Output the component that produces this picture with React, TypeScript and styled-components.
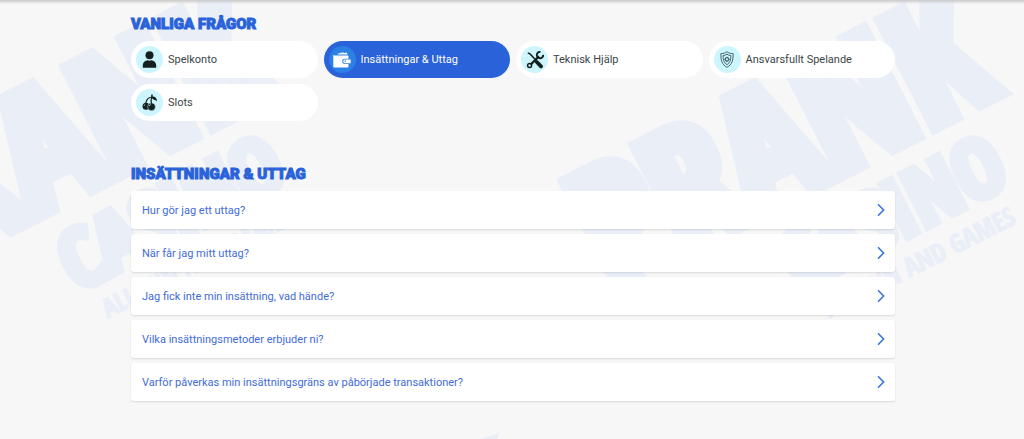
import React, { useState } from "react";
import styled, { createGlobalStyle } from "styled-components";

const GlobalStyle = createGlobalStyle`
  *, *::before, *::after { box-sizing: border-box; }
  body {
    margin: 0;
    background: #f7f7f7;
    font-family: Roboto, "Liberation Sans", sans-serif;
  }
`;

const Page = styled.main`
  position: relative;
  min-height: 100vh;
  padding: 16px 16px 38px;
  overflow: hidden;
`;

const TopShade = styled.div`
  position: absolute;
  inset: 0 0 auto;
  height: 4px;
  background: linear-gradient(#c9c9c9, rgba(247, 247, 247, 0));
`;

const Watermark = styled.svg`
  position: absolute;
  inset: 0;
  width: 100%;
  height: 100%;
  fill: #e9eef7;
  stroke: #e9eef7;
  font-family: "Open Sans Condensed", "Noto Sans ExtraCondensed", "Roboto Condensed", Roboto, sans-serif;
  font-weight: 700;
  pointer-events: none;
`;

const Container = styled.div`
  position: relative;
  max-width: 766px;
  margin: 0 auto;
  padding-left: 2px;
`;

const Heading = styled.h2`
  margin: 0 0 9px;
  color: #2962d9;
  font-family: Roboto, "Open Sans", sans-serif;
  font-size: 15px;
  font-weight: 900;
  line-height: 16px;
  text-transform: uppercase;
  -webkit-text-stroke: 1px #2962d9;
`;

const Categories = styled.nav`
  display: grid;
  grid-template-columns: repeat(auto-fill, minmax(180px, 1fr));
  gap: 6px;
  margin-bottom: 45px;
`;

const IconDisc = styled.span<{ $active: boolean }>`
  display: flex;
  align-items: center;
  justify-content: center;
  flex: none;
  width: 27px;
  height: 27px;
  border-radius: 50%;
  background: ${(p) => (p.$active ? "#2b80e3" : "#ccf5fe")};
  color: ${(p) => (p.$active ? "#fff" : "#13201f")};
`;

const Category = styled.button<{ $active: boolean }>`
  display: flex;
  align-items: center;
  gap: 5px;
  height: 37px;
  padding: 0 5px;
  border: 0;
  border-radius: 19px;
  background: ${(p) => (p.$active ? "#2962d9" : "#fff")};
  color: ${(p) => (p.$active ? "#fff" : "#3b4546")};
  font: 400 11px/17px Roboto, sans-serif;
  text-align: left;
  cursor: pointer;
`;

const Questions = styled.ul`
  display: grid;
  gap: 5px;
  margin: 0;
  padding: 0;
  list-style: none;
`;

const Question = styled.button`
  display: flex;
  align-items: center;
  justify-content: space-between;
  width: 100%;
  min-height: 38px;
  padding: 0 10px 0 11px;
  border: 0;
  border-radius: 3px;
  background: #fff;
  box-shadow: 0 1px 2px rgba(0, 0, 0, 0.12);
  color: #3f6cd8;
  font: 400 11px/17px Roboto, sans-serif;
  text-align: left;
  cursor: pointer;
`;

const PersonIcon = () => (
  <svg width="17" height="17" viewBox="0 0 17 17" fill="currentColor" aria-hidden="true">
    <circle cx="8.5" cy="4.3" r="4" />
    <path d="M1.8 16.7v-2.2c0-3 2.3-5 5-5.2 1 .5 2.4.5 3.4 0 2.7.2 5 2.2 5 5.2v2.2z" />
  </svg>
);

const WalletIcon = () => (
  <svg width="18" height="16" viewBox="0 0 18 16" fill="currentColor" aria-hidden="true">
    <path d="M3.5 2.6 13.6.4l1 2.2zM5.5 1.3 10.5.3v.6L5 2z" />
    <path d="M.3 2.2c0 .8.6 1.2 1.4 1.2h12.8c.6 0 1 .4 1 1v2.3h-3.7a2.6 2.6 0 0 0 0 5.2h3.7v2.7c0 .6-.4 1-1 1H1.3c-.6 0-1-.4-1-1z" />
    <path fillRule="evenodd" d="M12 7.5h5.7v3.7H12a1.85 1.85 0 0 1 0-3.7zm.2 1.1a.75.75 0 1 0 0 1.5.75.75 0 0 0 0-1.5z" />
  </svg>
);

const ToolsIcon = () => (
  <svg width="18" height="18" viewBox="0 0 18 18" fill="none" stroke="currentColor" aria-hidden="true">
    <path d="M1.8 1.8 4 2.9l6.5 6.8" strokeWidth="1.5" />
    <path d="m10.8 11 4.2 4.4" strokeWidth="3.8" strokeLinecap="round" />
    <path d="M4.6 13.6 13 5.2" strokeWidth="2.2" />
    <circle cx="3.6" cy="14.4" r="2" strokeWidth="1.5" />
    <path d="M14.5.9a3.2 3.2 0 1 0 2.7 3" strokeWidth="1.9" />
  </svg>
);

const ShieldIcon = () => (
  <svg width="14" height="17" viewBox="0 0 14 17" fill="none" stroke="#47666c" aria-hidden="true">
    <path d="M7 .7C5.5 2 3.3 2.6.9 2.6c-.2 6.5.9 10.9 6.1 13.7 5.2-2.8 6.3-7.2 6.1-13.7C10.7 2.6 8.5 2 7 .7z" strokeWidth="1" />
    <path d="M7 3.2c-1.1.8-2.5 1.2-3.9 1.3 0 4.2.8 7.2 3.9 9.2 3.1-2 3.9-5 3.9-9.2C9.5 4.4 8.1 4 7 3.2z" strokeWidth="1" />
    <circle cx="7" cy="8.3" r="1.7" strokeWidth="1.2" />
    <path d="M7 5.7v1M7 10v1M4.5 8.3h1M8.6 8.3h1" strokeWidth="1.2" />
  </svg>
);

const CherryIcon = () => (
  <svg width="16" height="17" viewBox="0 0 16 17" fill="currentColor" aria-hidden="true">
    <circle cx="4" cy="12.3" r="3.5" />
    <circle cx="9.5" cy="12.8" r="3.9" stroke="#ccf5fe" strokeWidth=".5" />
    <path d="M3.8 9C4.3 6 6 3.6 9.8 3M9.4 9.5C8.8 7 9 5 9.8 3" fill="none" stroke="currentColor" strokeWidth="1.2" />
    <path d="M9.2.4h1.5v2.2c2.6.1 4.3 1.6 4.3 4.8-1.1-1.5-2.3-1-3.5-1.8-1-.7-1.5-1.6-2.3-2z" />
    <path d="M7.2 12.2a2.4 2.4 0 0 1 1.5-1.7M2 11.8a2 2 0 0 1 1.2-1.3" fill="none" stroke="#ccf5fe" strokeWidth=".8" />
  </svg>
);

const Chevron = () => (
  <svg width="8" height="14" viewBox="0 0 8 14" fill="none" stroke="#3b74df" strokeWidth="1.6" aria-hidden="true">
    <path d="m1 1.3 5.6 5.7L1 12.7" />
  </svg>
);

const Logo = ({ x, y }: { x: number; y: number }) => (
  <g transform={`translate(${x} ${y}) rotate(-27)`}>
    <text x="3" y="-6" fontSize="166" strokeWidth="14">PRANK</text>
    <text x="171" y="80" fontSize="82" strokeWidth="8">CASINO</text>
    <text x="187" y="117" fontSize="26" strokeWidth="1">ALL FUN AND GAMES</text>
  </g>
);

const categories = [
  { name: "Spelkonto", Icon: PersonIcon },
  { name: "Insättningar & Uttag", Icon: WalletIcon },
  { name: "Teknisk Hjälp", Icon: ToolsIcon },
  { name: "Ansvarsfullt Spelande", Icon: ShieldIcon },
  { name: "Slots", Icon: CherryIcon },
];

const questions = [
  "Hur gör jag ett uttag?",
  "När får jag mitt uttag?",
  "Jag fick inte min insättning, vad hände?",
  "Vilka insättningsmetoder erbjuder ni?",
  "Varför påverkas min insättningsgräns av påbörjade transaktioner?",
];

export default function App() {
  const [active, setActive] = useState("Insättningar & Uttag");
  return (
    <Page>
      <GlobalStyle />
      <Watermark viewBox="0 0 1024 439" preserveAspectRatio="xMidYMin slice" aria-hidden="true">
        <Logo x={-112} y={299} />
        <Logo x={610} y={299} />
        <path d="M480 439 499 433 497 439z" stroke="none" />
      </Watermark>
      <TopShade />
      <Container>
        <Heading>Vanliga frågor</Heading>
        <Categories aria-label="Vanliga frågor">
          {categories.map(({ name, Icon }) => (
            <Category
              key={name}
              type="button"
              $active={name === active}
              aria-pressed={name === active}
              onClick={() => setActive(name)}
            >
              <IconDisc $active={name === active}>
                <Icon />
              </IconDisc>
              {name}
            </Category>
          ))}
        </Categories>
        <Heading>{active}</Heading>
        <Questions>
          {questions.map((q) => (
            <li key={q}>
              <Question type="button">
                {q}
                <Chevron />
              </Question>
            </li>
          ))}
        </Questions>
      </Container>
    </Page>
  );
}
